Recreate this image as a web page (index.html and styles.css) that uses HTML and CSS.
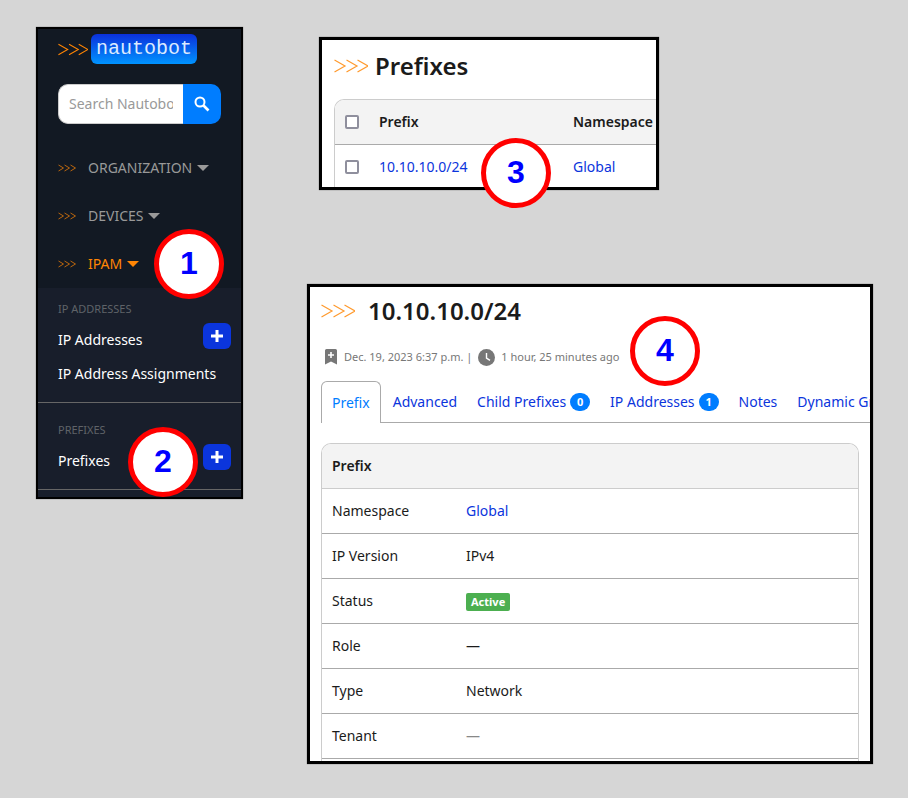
FILE: index.html
```html
<!DOCTYPE html>
<html lang="en">
<head>
<meta charset="utf-8">
<title>Nautobot prefixes</title>
<link rel="stylesheet" href="styles.css">
</head>
<body>
<svg width="0" height="0" class="defs" aria-hidden="true">
  <symbol id="chevrons" viewBox="0 0 34 14"><path d="M.5 1 11 7 .5 13M12.500 1 23 7 12.500 13M23.500 1 34 7 23.500 13" fill="none" stroke="currentColor" stroke-width="1.200"/></symbol>
  <symbol id="chevrons-small" viewBox="0 0 18 8"><path d="M.5 1 5.500 4 .5 7M6.500 1 11.500 4 6.500 7M12.500 1 17.500 4 12.500 7" fill="none" stroke="currentColor" stroke-width="1"/></symbol>
  <symbol id="caret" viewBox="0 0 12 6"><path d="M0 0H12L6 6Z" fill="currentColor"/></symbol>
  <symbol id="plus" viewBox="0 0 12 12"><path d="M4.500 0h3v4.500H12v3H7.500V12h-3V7.500H0v-3h4.500Z" fill="currentColor"/></symbol>
</svg>
<main class="board">
  <div class="shot">
    <nav class="panel sidebar">
      <a class="brand" href="#"><svg class="brand-chevrons"><use href="#chevrons"/></svg><span class="brand-name">nautobot</span></a>
      <form class="search">
        <input type="text" placeholder="Search Nautobot" aria-label="Search Nautobot">
        <button type="button" aria-label="Search"><svg width="16" height="16" viewBox="0 0 16 16"><circle cx="6" cy="6" r="4.500" fill="none" stroke="currentColor" stroke-width="2"/><path d="M9.500 9.500 14.500 14.500" stroke="currentColor" stroke-width="2.600"/></svg></button>
      </form>
      <a class="menu" href="#"><svg class="menu-chevrons"><use href="#chevrons-small"/></svg>ORGANIZATION<svg class="caret"><use href="#caret"/></svg></a>
      <a class="menu" href="#"><svg class="menu-chevrons"><use href="#chevrons-small"/></svg>DEVICES<svg class="caret"><use href="#caret"/></svg></a>
      <a class="menu active" href="#"><svg class="menu-chevrons"><use href="#chevrons-small"/></svg>IPAM<svg class="caret"><use href="#caret"/></svg></a>
      <div class="submenu">
        <section class="group">
          <h3>IP ADDRESSES</h3>
          <div class="entry"><a href="#">IP Addresses</a><button type="button" aria-label="Add IP address"><svg width="12" height="12"><use href="#plus"/></svg></button></div>
          <div class="entry"><a href="#">IP Address Assignments</a></div>
        </section>
        <section class="group">
          <h3>PREFIXES</h3>
          <div class="entry"><a href="#">Prefixes</a><button type="button" aria-label="Add prefix"><svg width="12" height="12"><use href="#plus"/></svg></button></div>
        </section>
      </div>
    </nav>
    <span class="marker one">1</span>
    <span class="marker two">2</span>
  </div>

  <div class="content">
    <div class="shot list-shot">
      <section class="panel list">
        <h1><svg class="title-chevrons"><use href="#chevrons"/></svg>Prefixes</h1>
        <table class="prefixes">
          <thead><tr><th class="check"><input type="checkbox" aria-label="Select all"></th><th>Prefix</th><th class="namespace">Namespace</th></tr></thead>
          <tbody><tr><td class="check"><input type="checkbox" aria-label="Select 10.10.10.0/24"></td><td><a href="#">10.10.10.0/24</a></td><td><a href="#">Global</a></td></tr></tbody>
        </table>
      </section>
      <span class="marker three">3</span>
    </div>

    <div class="shot">
      <section class="panel detail">
        <h1><svg class="title-chevrons"><use href="#chevrons"/></svg>10.10.10.0/24</h1>
        <p class="meta">
          <svg class="bookmark" width="12" height="16" viewBox="0 0 12 16"><path d="M1.500 0h9Q12 0 12 1.500V15.500L6 12.500 0 15.500V1.500Q0 0 1.500 0Z" fill="currentColor"/><path d="M6 3v6M3 6h6" stroke="#fff" stroke-width="1.600"/></svg>
          <span>Dec. 19, 2023 6:37 p.m. |</span>
          <svg class="clock" width="17" height="17" viewBox="0 0 17 17"><circle cx="8.500" cy="8.500" r="8.500" fill="currentColor"/><path d="M8.500 4v5l3.500 2.300" fill="none" stroke="#fff" stroke-width="1.400"/></svg>
          <span>1 hour, 25 minutes ago</span>
        </p>
        <nav class="tabs">
          <a class="current" href="#">Prefix</a>
          <a href="#">Advanced</a>
          <a href="#">Child Prefixes<span class="badge">0</span></a>
          <a href="#">IP Addresses<span class="badge">1</span></a>
          <a href="#">Notes</a>
          <a href="#">Dynamic Groups</a>
        </nav>
        <div class="card">
          <h2>Prefix</h2>
          <table class="attributes">
            <tr><th>Namespace</th><td><a href="#">Global</a></td></tr>
            <tr><th>IP Version</th><td>IPv4</td></tr>
            <tr><th>Status</th><td><span class="status">Active</span></td></tr>
            <tr><th>Role</th><td>—</td></tr>
            <tr><th>Type</th><td>Network</td></tr>
            <tr><th>Tenant</th><td class="muted">—</td></tr>
          </table>
        </div>
      </section>
      <span class="marker four">4</span>
    </div>
  </div>
</main>
</body>
</html>
```
FILE: styles.css
```css
* { box-sizing: border-box; }

body {
  margin: 0;
  background: #d6d6d6;
  color: #1b1b1b;
  font: 14px/20px "Noto Sans", "Open Sans", sans-serif;
}

a { color: #0b35dc; text-decoration: none; }
svg { flex: none; display: block; }
.defs { position: absolute; }
button { border: 0; padding: 0; display: flex; align-items: center; justify-content: center; color: #fff; }

.board {
  display: grid;
  grid-template-columns: minmax(0, 207fr) minmax(0, 566fr);
  gap: 64px;
  align-items: start;
  padding: 27px 35px 34px 36px;
}

.shot { position: relative; }
.panel { overflow: hidden; border: 3px solid #000; background: #fff; box-shadow: 0 0 1px #555; }

/* Sidebar */
.sidebar { border-width: 2px; background: #121923; }
.brand { display: flex; align-items: center; gap: 3px; padding: 5px 0 0 20px; color: #ff8504; }
.brand-chevrons { width: 30px; height: 13px; }
.brand-name {
  padding: 0 5px;
  border-radius: 6px;
  background: linear-gradient(#0b30dc, #0094ff);
  color: #dceaff;
  font: 20px/30px "Liberation Mono", monospace;
}
.search { display: flex; height: 40px; margin: 20px; }
.search input {
  flex: 1;
  min-width: 0;
  padding: 0 10px;
  border: 1px solid #ccc;
  border-right: 0;
  border-radius: 10px 0 0 10px;
  background: #fff;
  font: inherit;
}
.search input::placeholder { color: #999; opacity: 1; }
.search button { width: 38px; border-radius: 0 10px 10px 0; background: #007dff; }
.menu { display: flex; align-items: center; height: 48px; padding-left: 20px; color: #999; }
.menu-chevrons { width: 18px; height: 8px; margin-right: 12px; color: #b9660f; }
.caret { width: 12px; height: 6px; margin-left: 5px; }
.menu.active { color: #ff8504; }
.submenu { background: #181e2b; padding-bottom: 7px; }
.group { padding: 17px 10px 11px 20px; border-bottom: 1px solid #666; }
.group:first-child { padding-top: 11px; }
.group h3 { margin: 0 0 4px; color: #5f6368; font-size: 11px; font-weight: 400; line-height: 20px; }
.entry { display: flex; justify-content: space-between; align-items: flex-start; height: 34px; }
.entry a { color: #fff; line-height: 34px; white-space: nowrap; }
.entry button { width: 28px; height: 26px; border-radius: 6px; background: #0b35dc; }

/* Prefix list */
h1 { display: flex; align-items: center; margin: 0; font-size: 24px; font-weight: 600; line-height: 28px; }
.title-chevrons { width: 34px; height: 14px; color: #ff9a2e; }
.list-shot { max-width: 340px; margin: 10px 0 94px 12px; }
.list { padding: 12px 0 0 12px; }
.list h1 { gap: 7px; }
.prefixes {
  width: 100%;
  margin-top: 19px;
  border: solid #ccc;
  border-width: 1px 0 0 1px;
  border-radius: 10px 0 0 0;
  border-spacing: 0;
  overflow: hidden;
  text-align: left;
}
.prefixes th { padding: 12px 0; background: #f3f3f3; border-bottom: 1px solid #aaa; font-weight: 600; }
.prefixes td { padding: 12px 0 10px; }
.prefixes .check { width: 44px; padding-left: 10px; }
.prefixes .namespace { width: 83px; }
.prefixes input {
  display: block;
  appearance: none;
  width: 14px;
  height: 14px;
  margin: 0;
  border: 2px solid #8f8f9d;
  border-radius: 2px;
  background: #fff;
}

/* Prefix detail */
.detail { padding: 10px 0 0 11px; }
.detail h1 { gap: 13px; }
.meta { display: flex; align-items: center; margin: 22px 0 14px 4px; color: #777; font-size: 11px; }
.bookmark { margin-right: 7px; }
.clock { margin: 0 6px; }
.tabs { display: flex; border-bottom: 1px solid #aaa; white-space: nowrap; }
.tabs a { display: flex; align-items: center; height: 41px; padding: 0 10px; }
.tabs .current {
  height: 42px;
  margin: 0 2px -1px 0;
  border: 1px solid #aaa;
  border-bottom: 0;
  border-radius: 6px 6px 0 0;
  background: #fff;
  color: #007dff;
}
.badge {
  width: 20px;
  margin-left: 4px;
  border-radius: 9px;
  background: #007dff;
  color: #fff;
  font-size: 11px;
  font-weight: 700;
  line-height: 18px;
  text-align: center;
}
.card {
  margin: 20px 11px 0 0;
  padding-bottom: 2px;
  overflow: hidden;
  border: 1px solid #ccc;
  border-bottom: 0;
  border-radius: 10px 10px 0 0;
}
.card h2 { margin: 0; padding: 12px 10px; background: #f3f3f3; border-bottom: 1px solid #ccc; font-size: 14px; font-weight: 600; line-height: 20px; }
.attributes { width: 100%; border-spacing: 0; text-align: left; }
.attributes th, .attributes td { height: 45px; padding: 0 10px; border-bottom: 1px solid #aaa; font-weight: 400; }
.attributes th { width: 134px; }
.attributes .muted { color: #888; }
.status {
  display: inline-block;
  padding: 0 5px;
  border-radius: 2px;
  background: #4caf50;
  color: #fff;
  font-size: 11px;
  font-weight: 700;
  line-height: 18px;
  vertical-align: middle;
}

/* Numbered callouts over the panels */
.marker {
  position: absolute;
  width: 70px;
  height: 70px;
  border: 5px solid #f00;
  border-radius: 50%;
  background: #fff;
  color: #00f;
  font: 700 32px/58px "Liberation Sans", sans-serif;
  text-align: center;
}
.one { left: 118px; top: 202px; }
.two { left: 92px; top: 400px; }
.three { left: 162px; top: 101px; }
.four { left: 323px; top: 32px; }
```
